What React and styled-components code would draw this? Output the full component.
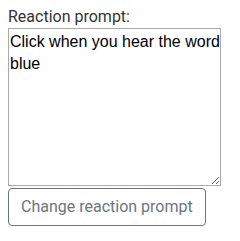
import styled, { createGlobalStyle } from "styled-components"

const GlobalStyle = createGlobalStyle`
    body {
        margin: 0;
        padding: 8px;
        font-family: Roboto, "Liberation Sans", sans-serif;
        background: #fff;
    }
`

const Form = styled.div`
    display: flex;
    flex-direction: column;
    align-items: flex-start;
`

const Label = styled.label`
    display: block;
    font-size: 16px;
    line-height: 18px;
    color: #333;
    margin-bottom: 2px;
`

const PromptArea = styled.textarea`
    box-sizing: border-box;
    width: 213px;
    height: 158px;
    margin: 0;
    padding: 2px 0 2px 1px;
    border: 1px solid #aaa;
    border-radius: 0;
    font-family: "Liberation Sans", Arial, sans-serif;
    font-size: 16px;
    line-height: 22.4px;
    color: #000;
    resize: both;
    outline: none;
    overflow: hidden;
`

const OutlineButton = styled.button`
    box-sizing: border-box;
    margin-top: 2px;
    padding: 6px 12px;
    font-family: Roboto, "Liberation Sans", sans-serif;
    font-size: 16px;
    line-height: 24px;
    color: #6c757d;
    background: transparent;
    border: 1px solid #6c757d;
    border-radius: 4px;
    cursor: pointer;
`

export default function App() {
    return (
        <>
            <GlobalStyle />
            <Form>
                <Label htmlFor="prompt">Reaction prompt:</Label>
                <PromptArea id="prompt" defaultValue="Click when you hear the word blue" />
                <OutlineButton>Change reaction prompt</OutlineButton>
            </Form>
        </>
    )
}
